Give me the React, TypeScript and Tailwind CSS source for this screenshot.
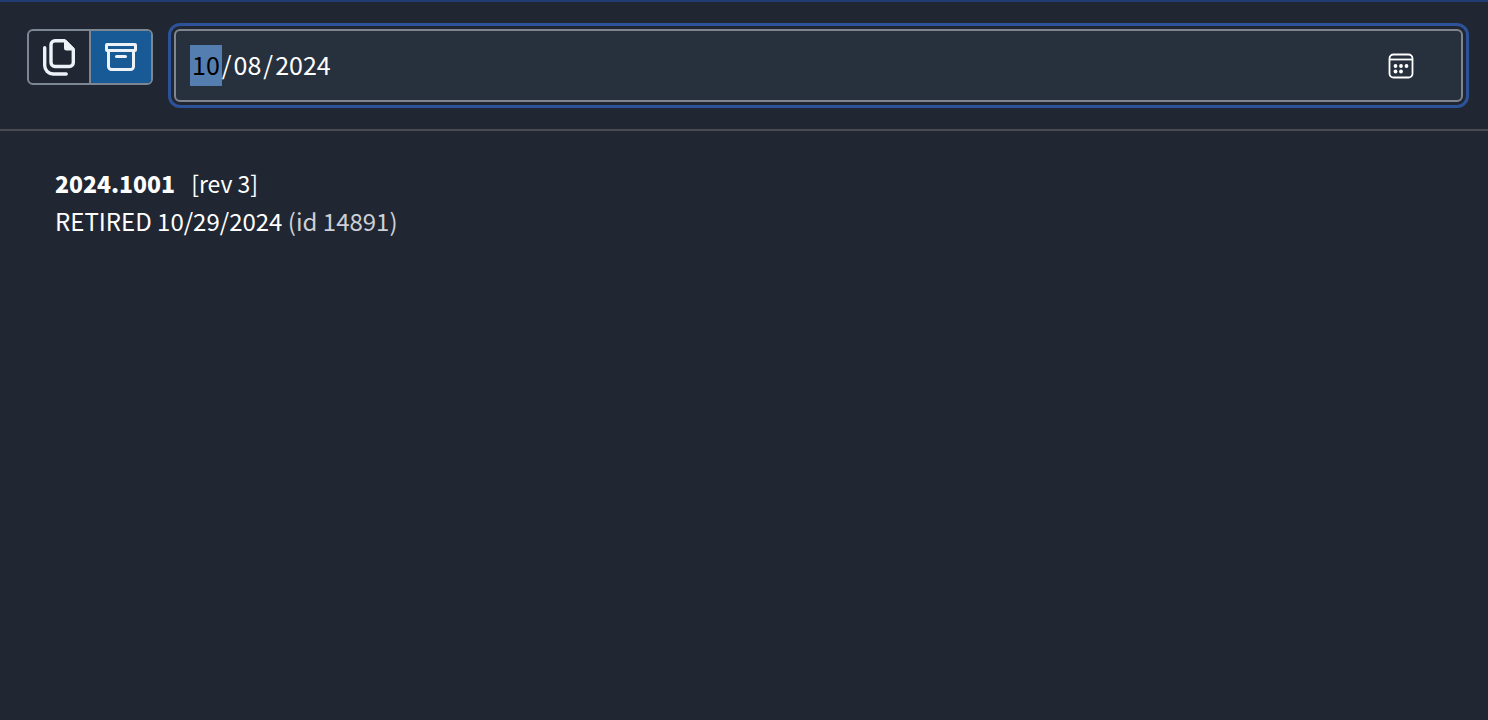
import { useEffect, useRef, useState } from 'react'

interface Revision {
  id: number
  code: string
  rev: number
  retired: string
}

const REVISIONS: Revision[] = [
  { id: 14891, code: '2024.1001', rev: 3, retired: '10/29/2024' },
]

function CopiesIcon() {
  return (
    <svg className="w-8 h-[38px]" viewBox="0 0 32 38" fill="none" stroke="currentColor" strokeWidth={3.4} strokeLinecap="round" strokeLinejoin="round" aria-hidden="true">
      <path d="M12 2.7h9.5l8.8 8.8v13a4 4 0 0 1-4 4H12a4 4 0 0 1-4-4V6.700a4 4 0 0 1 4-4z" />
      <path d="M21 2h2L31 10v2.500h-7.500a2.500 2.500 0 0 1-2.500-2.500z" fill="currentColor" stroke="none" />
      <path d="M1.7 9.7V27.500a8.500 8.500 0 0 0 8.500 8.500h13" />
    </svg>
  )
}

function ArchiveIcon() {
  return (
    <svg className="w-8 h-7" viewBox="0 0 32 28" fill="none" stroke="currentColor" strokeWidth={3} strokeLinecap="round" strokeLinejoin="round" aria-hidden="true">
      <rect x="1.5" y="1.5" width="29" height="6" rx="0.5" />
      <path d="M3.5 7.5v16a3 3 0 0 0 3 3h19a3 3 0 0 0 3-3v-16" />
      <path d="M11.5 13.5h9" />
    </svg>
  )
}

function CalendarIcon() {
  return (
    <svg className="w-[26px] h-[26px]" viewBox="0 0 26 26" fill="none" stroke="currentColor" strokeWidth={1.8} aria-hidden="true">
      <rect x="1.5" y="1.5" width="23" height="23" rx="4" />
      <path d="M1.5 6.5h23" />
      <g fill="currentColor" stroke="none">
        <circle cx="7.5" cy="13" r="1.9" />
        <circle cx="13" cy="13" r="1.9" />
        <circle cx="18.5" cy="13" r="1.9" />
        <circle cx="7.5" cy="18.5" r="1.9" />
        <circle cx="13" cy="18.5" r="1.9" />
      </g>
    </svg>
  )
}

export default function App() {
  const [archived, setArchived] = useState(true)
  const [date, setDate] = useState('2024-10-08')
  const dateRef = useRef<HTMLInputElement>(null)

  useEffect(() => {
    dateRef.current?.focus()
  }, [])

  return (
    <div className="min-h-screen border-t-2 border-[#1f3c74] bg-[#202733] text-white font-['Noto_Sans_CJK_SC',sans-serif]">
      <header className="flex items-start border-b-2 border-[#4a4b50] pt-[27px] pb-[27px] pl-[27px] pr-[25px]">
        <div className="flex h-14 shrink-0 overflow-hidden rounded-md border-2 border-[#7d8794] text-[#edf1f8]" role="group" aria-label="View">
          <button
            type="button"
            aria-label="Current"
            aria-pressed={!archived}
            onClick={() => setArchived(false)}
            className={archived ? 'flex w-[60px] items-center justify-center' : 'flex w-[60px] items-center justify-center bg-[#185a96]'}
          >
            <CopiesIcon />
          </button>
          <button
            type="button"
            aria-label="Archived"
            aria-pressed={archived}
            onClick={() => setArchived(true)}
            className={archived ? 'flex w-[62px] items-center justify-center border-l-2 border-[#7d8794] bg-[#185a96]' : 'flex w-[62px] items-center justify-center border-l-2 border-[#7d8794]'}
          >
            <ArchiveIcon />
          </button>
        </div>

        <div className="relative ml-[21px] flex-1">
          <input
            ref={dateRef}
            type="date"
            aria-label="Date"
            value={date}
            onChange={(e) => setDate(e.target.value)}
            className="block h-[73px] w-full rounded-md border-2 border-[#81858f] bg-[#27313d] pb-[2px] pl-[14px] pr-12 text-[25px] outline-3 outline-offset-3 outline-[#2c5299] [&::-webkit-datetime-edit]:p-0 [&::-webkit-datetime-edit-fields-wrapper]:py-[3px] [&::-webkit-datetime-edit-fields-wrapper]:px-0 [&::-webkit-datetime-edit-month-field]:bg-[#557eb0] [&::-webkit-datetime-edit-month-field]:px-[2px] [&::-webkit-datetime-edit-month-field]:pt-[1px] [&::-webkit-datetime-edit-month-field]:pb-[4px] [&::-webkit-datetime-edit-month-field]:text-black [&::-webkit-datetime-edit-day-field]:px-[2px] [&::-webkit-datetime-edit-year-field]:px-[2px] [&::-webkit-calendar-picker-indicator]:opacity-0"
          />
          <span className="pointer-events-none absolute inset-y-0 right-[49px] flex items-center">
            <CalendarIcon />
          </span>
        </div>
      </header>

      <main className="px-[55px] pt-[33px]">
        <ul>
          {REVISIONS.map((r) => (
            <li key={r.id} className="text-2xl leading-[38px]">
              <p className="text-[23px] leading-[38px]">
                <strong className="mr-4 font-black">{r.code}</strong>
                [rev {r.rev}]
              </p>
              <p>
                RETIRED {r.retired} <span className="text-[#cdd0d6]">(id {r.id})</span>
              </p>
            </li>
          ))}
        </ul>
      </main>
    </div>
  )
}
